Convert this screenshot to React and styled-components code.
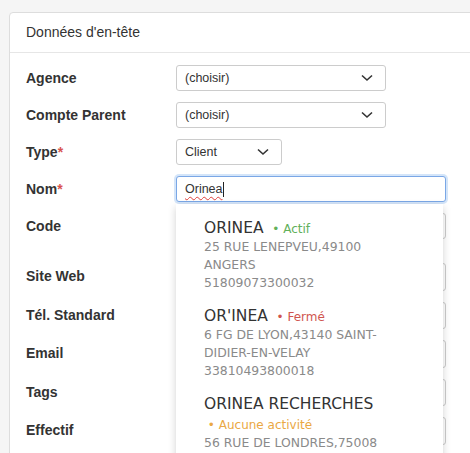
import React from "react";
import styled, { createGlobalStyle } from "styled-components";

const GlobalStyle = createGlobalStyle`
  html, body {
    margin: 0;
    padding: 0;
    background: #f5f5f5;
    font-family: "Liberation Sans", Arial, sans-serif;
    color: #333;
    overflow: hidden;
  }
`;

const suggestions = [
  {
    name: "ORINEA",
    status: "Actif",
    tone: "active",
    address: "25 RUE LENEPVEU,49100 ANGERS",
    siret: "51809073300032",
  },
  {
    name: "OR'INEA",
    status: "Fermé",
    tone: "closed",
    address: "6 FG DE LYON,43140 SAINT-DIDIER-EN-VELAY",
    siret: "33810493800018",
  },
  {
    name: "ORINEA RECHERCHES",
    status: "Aucune activité",
    tone: "none",
    address: "56 RUE DE LONDRES,75008 PARIS",
    siret: "",
  },
];

const Chevron = () => (
  <svg width="12" height="8" viewBox="0 0 12 8">
    <polyline
      points="1,1.5 6,6 11,1.5"
      fill="none"
      stroke="#333"
      strokeWidth="1.6"
    />
  </svg>
);

export default function App() {
  return (
    <>
      <GlobalStyle />
      <Page>
        <Card>
          <CardHeader>Données d'en-tête</CardHeader>
          <Form>
            <Row>
              <Label>Agence</Label>
              <Select $width={210}>
                (choisir)
                <Chevron />
              </Select>
            </Row>
            <Row>
              <Label>Compte Parent</Label>
              <Select $width={210}>
                (choisir)
                <Chevron />
              </Select>
            </Row>
            <Row>
              <Label>
                Type<Req>*</Req>
              </Label>
              <Select $width={106}>
                Client
                <Chevron />
              </Select>
            </Row>
            <Row>
              <Label>
                Nom<Req>*</Req>
              </Label>
              <Field>
                <FocusInput>
                  <Typed>Orinea</Typed>
                  <Caret />
                </FocusInput>
                <Dropdown>
                  {suggestions.map((s) => (
                    <Item key={s.name}>
                      <Title>
                        {s.name}{" "}
                        <Status $tone={s.tone}>&nbsp;• {s.status}</Status>
                      </Title>
                      <Line>{s.address}</Line>
                      {s.siret && <Line>{s.siret}</Line>}
                    </Item>
                  ))}
                </Dropdown>
              </Field>
            </Row>
            <Row $h={39}>
              <Label>Code</Label>
              <TextInput />
            </Row>
            <Row $h={27.5}>
              <Label $lh={27.5}>Site Web</Label>
              <TextInput $h={27.5} />
            </Row>
            <Row $h={27.5}>
              <Label $lh={27.5}>Tél. Standard</Label>
              <TextInput $h={27.5} />
            </Row>
            <Row $h={27.5}>
              <Label $lh={27.5}>Email</Label>
              <TextInput $h={27.5} />
            </Row>
            <Row $h={27.5}>
              <Label $lh={27.5}>Tags</Label>
              <TextInput $h={27.5} />
            </Row>
            <Row $h={27.5}>
              <Label $lh={27.5}>Effectif</Label>
              <TextInput $h={27.5} />
            </Row>
          </Form>
        </Card>
      </Page>
    </>
  );
}

const Page = styled.div`
  padding: 12px 0 0 9px;
  height: 453px;
  box-sizing: border-box;
  overflow: hidden;
`;

const Card = styled.div`
  width: 560px;
  background: #fff;
  border: 1px solid #ddd;
  border-radius: 4px;
  min-height: 600px;
`;

const CardHeader = styled.div`
  height: 39px;
  line-height: 39px;
  padding-left: 16px;
  font-size: 14px;
  color: #333;
  border-bottom: 1px solid #e6e6e6;
`;

const Form = styled.div`
  display: flex;
  flex-direction: column;
  gap: 11px;
  padding: 12px 0 0 16px;
`;

const Row = styled.div`
  display: flex;
  align-items: flex-start;
  height: ${(p) => p.$h || 26}px;
`;

const Label = styled.div`
  width: 150px;
  flex: none;
  font-weight: bold;
  font-size: 14px;
  line-height: ${(p) => p.$lh || 26}px;
  color: #333;
`;

const Req = styled.span`
  color: #d9534f;
`;

const Select = styled.div`
  width: ${(p) => p.$width}px;
  height: 26px;
  box-sizing: border-box;
  border: 1px solid #ccc;
  border-radius: 3px;
  padding: 0 12px 0 8px;
  display: flex;
  align-items: center;
  justify-content: space-between;
  font-size: 12.5px;
  color: #333;
  background: #fff;
`;

const TextInput = styled.div`
  width: 270px;
  height: ${(p) => p.$h || 26}px;
  box-sizing: border-box;
  border: 1px solid #ccc;
  border-radius: 3px;
  background: #fff;
`;

const Field = styled.div`
  position: relative;
  width: 270px;
`;

const FocusInput = styled.div`
  height: 26px;
  box-sizing: border-box;
  border: 1px solid #7aa7e6;
  border-radius: 3px;
  box-shadow: 0 0 0 2px rgba(102, 160, 233, 0.28);
  display: flex;
  align-items: center;
  padding-left: 8px;
  font-size: 12.5px;
  color: #333;
  background: #fff;
`;

const Typed = styled.span`
  text-decoration: underline wavy #e0403a;
  text-decoration-skip-ink: none;
  text-underline-offset: 3px;
  text-decoration-thickness: 1px;
`;

const Caret = styled.span`
  width: 1px;
  height: 15px;
  background: #222;
`;

const Dropdown = styled.div`
  position: absolute;
  top: 28px;
  left: 0;
  width: 267px;
  background: #fff;
  padding-top: 7px;
  box-shadow: 0 3px 8px rgba(0, 0, 0, 0.18);
  z-index: 2;
`;

const Item = styled.div`
  padding: 7px 36px 7px 28px;
  font-family: "DejaVu Sans", Verdana, sans-serif;
`;

const Title = styled.div`
  font-size: 15.5px;
  line-height: 20px;
  color: #333;
`;

const toneColor = {
  active: "#62b05a",
  closed: "#d0554f",
  none: "#eaa844",
};

const Status = styled.span`
  display: inline-block;
  font-size: 12px;
  line-height: 18px;
  white-space: nowrap;
  color: ${(p) => toneColor[p.$tone]};
`;

const Line = styled.div`
  font-size: 12.4px;
  line-height: 18px;
  color: #8a8a8a;
`;
